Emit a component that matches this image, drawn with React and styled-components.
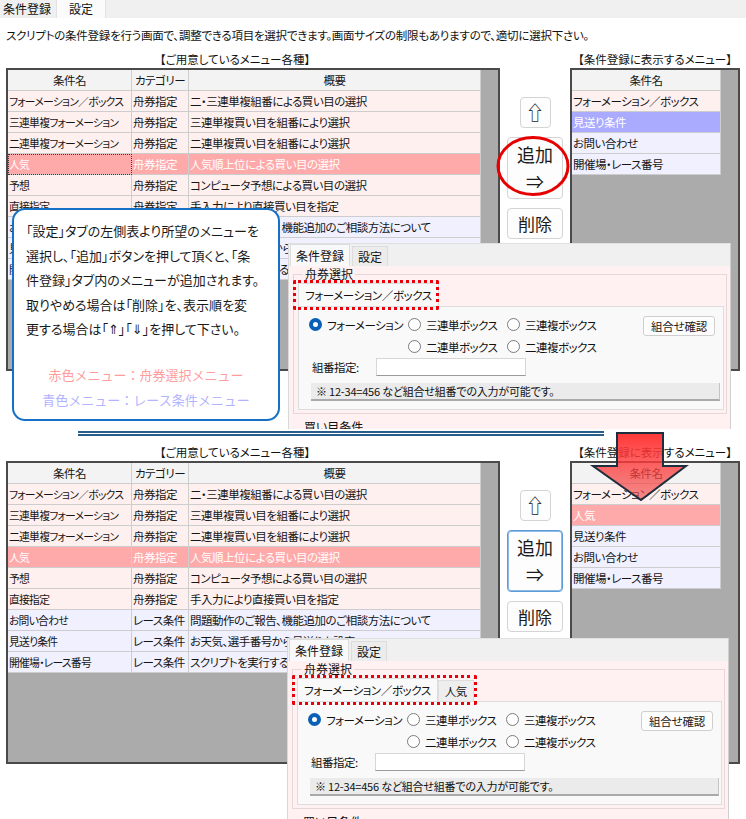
import React from "react";
import styled, { createGlobalStyle, css } from "styled-components";

const GlobalStyle = createGlobalStyle`
  html, body { margin: 0; padding: 0; background: #fff; }
  body {
    font-family: "Noto Sans CJK JP", "Noto Sans", "DejaVu Sans", sans-serif;
    font-feature-settings: "palt";
    color: #111;
  }
`;

const menuItems = [
  { name: "フォーメーション／ボックス", cat: "舟券指定", desc: "二・三連単複組番による買い目の選択", kind: "red" },
  { name: "三連単複フォーメーション", cat: "舟券指定", desc: "三連単複買い目を組番により選択", kind: "red" },
  { name: "二連単複フォーメーション", cat: "舟券指定", desc: "二連単複買い目を組番により選択", kind: "red" },
  { name: "人気", cat: "舟券指定", desc: "人気順上位による買い目の選択", kind: "red" },
  { name: "予想", cat: "舟券指定", desc: "コンピュータ予想による買い目の選択", kind: "red" },
  { name: "直接指定", cat: "舟券指定", desc: "手入力により直接買い目を指定", kind: "red" },
  { name: "お問い合わせ", cat: "レース条件", desc: "問題動作のご報告、機能追加のご相談方法について", kind: "blue" },
  { name: "見送り条件", cat: "レース条件", desc: "お天気、選手番号から見送りを設定", kind: "blue" },
  { name: "開催場・レース番号", cat: "レース条件", desc: "スクリプトを実行する場とレース番号を指定", kind: "blue" },
];

const topPicked = [
  { name: "フォーメーション／ボックス", kind: "red" },
  { name: "見送り条件", kind: "blue", selected: true },
  { name: "お問い合わせ", kind: "blue" },
  { name: "開催場・レース番号", kind: "blue" },
];

const bottomPicked = [
  { name: "フォーメーション／ボックス", kind: "red" },
  { name: "人気", kind: "red", selected: true },
  { name: "見送り条件", kind: "blue" },
  { name: "お問い合わせ", kind: "blue" },
  { name: "開催場・レース番号", kind: "blue" },
];

const rowBg = ({ $kind, $selected }) => {
  if ($selected) return $kind === "red" ? "#ffaaaa" : "#aaaaff";
  return $kind === "red" ? "#fff0f0" : "#f0f0ff";
};

const Page = styled.div`
  position: relative;
  width: 746px;
  height: 819px;
  overflow: hidden;
  background: #fff;
`;

const TopScreen = styled.div`
  height: 431px;
`;

const BottomScreen = styled.div`
  padding-top: 8px;
`;

const TabStrip = styled.div`
  display: flex;
  height: 18px;
  background: #f0f0f0;
  font-size: 12px;
  line-height: 18px;
`;

const Tab = styled.div`
  padding: 0 ${(p) => (p.$active ? "12px" : "3px")};
  margin-left: ${(p) => (p.$active ? "2px" : "0")};
  background: ${(p) => (p.$active ? "#fbfbfb" : "transparent")};
  border-left: ${(p) => (p.$active ? "1px solid #e2e2e2" : "none")};
  border-right: ${(p) => (p.$active ? "1px solid #e2e2e2" : "none")};
`;

const Description = styled.div`
  height: 33px;
  box-sizing: border-box;
  padding: 10px 0 0 6px;
  font-size: 11.5px;
  letter-spacing: -0.25px;
  line-height: 14px;
  white-space: nowrap;
`;

const LabelRow = styled.div`
  display: flex;
  height: 17px;
  font-size: 11.5px;
  line-height: 17px;
  white-space: nowrap;
`;

const ListLabel = styled.div`
  width: ${(p) => p.$width}px;
  margin-left: ${(p) => p.$offset}px;
  padding-right: ${(p) => p.$shift || 0}px;
  box-sizing: border-box;
  text-align: center;
`;

const MainRow = styled.div`
  display: flex;
  padding-left: 6px;
`;

const TableBox = styled.div`
  width: ${(p) => p.$width}px;
  height: 303px;
  box-sizing: border-box;
  border: 2px solid #4a4a4a;
  background: #ababab;
  overflow: hidden;
`;

const Row = styled.div`
  display: grid;
  width: max-content;
  grid-template-columns: ${(p) => p.$cols};
  background: ${(p) => (p.$header ? "#f3f3f3" : rowBg(p))};
`;

const Cell = styled.div`
  height: 20px;
  line-height: 20px;
  padding: 0 ${(p) => (p.$header ? "0" : "1px")};
  text-align: ${(p) => (p.$header ? "center" : "left")};
  border-right: 1px solid #cdcdcd;
  border-bottom: 1px solid #cdcdcd;
  font-size: ${(p) => (p.$narrow ? "10.8px" : "11.5px")};
  letter-spacing: ${(p) => (p.$narrow ? "-0.75px" : "-0.5px")};
  white-space: nowrap;
  overflow: hidden;
  color: ${(p) => (p.$selected ? "#fff" : "#151515")};
  ${(p) =>
    p.$focus &&
    css`
      outline: 1px dotted #3a3a3a;
      outline-offset: -1px;
    `}
`;

const ButtonCol = styled.div`
  width: 70px;
  display: flex;
  flex-direction: column;
  align-items: center;
  padding-top: 29px;
  gap: 9px;
`;

const SideButton = styled.button`
  width: ${(p) => p.$w}px;
  height: ${(p) => p.$h}px;
  box-sizing: border-box;
  padding: 0;
  border: 1px solid ${(p) => (p.$focused ? "#5c9bd6" : "#d4d4d4")};
  box-shadow: ${(p) => (p.$focused ? "inset 0 0 0 1px #8dbbe6" : "none")};
  border-radius: 4px;
  background: #fdfdfd;
  color: #1a1a1a;
  font-family: inherit;
  font-size: ${(p) => p.$size || 18}px;
  line-height: 1.5;
  display: flex;
  flex-direction: column;
  align-items: center;
  justify-content: center;
`;

const Divider = styled.div`
  margin-left: 78px;
  width: 526px;
  height: 1px;
  border-top: 2px solid #2a5d8a;
  border-bottom: 2px solid #2a5d8a;
`;

const Callout = styled.div`
  position: absolute;
  left: 12px;
  top: 208px;
  width: 268px;
  height: 213px;
  box-sizing: border-box;
  padding: 9px 0 0 12px;
  border: 2.5px solid #1670c4;
  border-radius: 13px;
  background: #fff;
  font-size: 13px;
  line-height: 24.5px;
  white-space: nowrap;
  color: #1a1a1a;
`;

const ColorLine = styled.div`
  text-align: center;
  padding-right: 12px;
  color: ${(p) => p.$color};
  margin-top: ${(p) => p.$gap || 0}px;
  line-height: 25px;
  font-feature-settings: normal;
`;

const Inset = styled.div`
  position: absolute;
  left: ${(p) => p.$left}px;
  top: ${(p) => p.$top}px;
  width: ${(p) => p.$width}px;
  height: ${(p) => p.$height}px;
  overflow: hidden;
  background: #fff1f1;
  border-left: 1px solid #d8d8d8;
  border-right: 1px solid #cfcfcf;
  border-top: 1px solid #e0e0e0;
  box-sizing: border-box;
`;

const InsetTabs = styled.div`
  display: flex;
  height: 22px;
  background: #f0f0f0;
  padding-left: 1px;
  font-size: 12px;
  line-height: 22px;
`;

const InsetTab = styled.div`
  padding: 0 5px;
  background: ${(p) => (p.$active ? "#f9f9f9" : "#ececec")};
  border: 1px solid #dcdcdc;
  border-bottom: none;
  margin-right: 2px;
  height: ${(p) => (p.$active ? "22px" : "20px")};
  margin-top: ${(p) => (p.$active ? "0" : "2px")};
  line-height: ${(p) => (p.$active ? "22px" : "20px")};
  box-sizing: border-box;
`;

const InsetBody = styled.div`
  padding: 1px 3px 0 4px;
`;

const Group = styled.fieldset`
  margin: 0;
  padding: 2px 2px 3px 4px;
  border: 1px solid #e6d8d8;
  min-width: 0;
`;

const Legend = styled.legend`
  margin-left: 5px;
  padding: 0 2px;
  font-size: 12px;
  line-height: 14px;
`;

const SubTabs = styled.div`
  position: relative;
  display: flex;
  align-items: flex-end;
  height: 23px;
  font-size: 11.5px;
  letter-spacing: -0.4px;
  &::after {
    content: "";
    position: absolute;
    left: -5px;
    top: -3px;
    width: ${(p) => p.$markWidth}px;
    height: 30px;
    border: 3.5px dotted #e8000a;
    box-sizing: border-box;
    border-radius: 2px;
  }
`;

const SubTab = styled.div`
  height: ${(p) => (p.$active ? "23px" : "21px")};
  line-height: ${(p) => (p.$active ? "23px" : "21px")};
  padding: 0 6px;
  background: ${(p) => (p.$active ? "#f9f9f9" : "#eeeeee")};
  border: 1px solid #dddddd;
  border-bottom: none;
  box-sizing: border-box;
  white-space: nowrap;
`;

const SubPage = styled.div`
  height: 104px;
  box-sizing: border-box;
  padding: 11px 8px 0 10px;
  background: #f9f9f9;
  border: 1px solid #dddddd;
  font-size: 11.5px;
  letter-spacing: -0.5px;
`;

const TopLine = styled.div`
  display: flex;
  justify-content: space-between;
`;

const RadioGrid = styled.div`
  display: grid;
  grid-template-columns: 99px 99px auto;
  row-gap: 9px;
`;

const Radio = styled.label`
  grid-column: ${(p) => p.$col};
  display: flex;
  align-items: center;
  gap: 5px;
  height: 13px;
  white-space: nowrap;
`;

const RadioDot = styled.span`
  flex: none;
  width: 13px;
  height: 13px;
  border-radius: 50%;
  box-sizing: border-box;
  background: #fff;
  border: ${(p) => (p.$on ? "4px solid #0a5fb6" : "1px solid #7b7b7b")};
`;

const CheckButton = styled.button`
  margin-top: -2px;
  width: 72px;
  height: 20px;
  padding: 0;
  border: 1px solid #cfcfcf;
  border-radius: 3px;
  background: #fdfdfd;
  font-family: inherit;
  font-size: 11.5px;
  letter-spacing: -0.3px;
  color: #1a1a1a;
`;

const FieldRow = styled.div`
  display: flex;
  align-items: center;
  margin-top: 5px;
  padding-left: 3px;
`;

const FieldLabel = styled.span`
  width: 64px;
`;

const TextBox = styled.div`
  width: 150px;
  height: 18px;
  box-sizing: border-box;
  background: #fff;
  border: 1px solid #d6d6d6;
  border-bottom-color: #9a9a9a;
`;

const Note = styled.div`
  margin: 7px 0 0 2px;
  width: 409px;
  height: 18px;
  box-sizing: border-box;
  padding-left: 5px;
  background: #ebebeb;
  border-bottom: 2px solid #a9a9a9;
  border-right: 1px solid #c4c4c4;
  font-size: 11px;
  letter-spacing: -0.2px;
  line-height: 17px;
  white-space: nowrap;
`;

const NextLegend = styled.div`
  padding: 6px 0 0 11px;
  font-size: 12px;
  line-height: 14px;
`;

const Overlay = styled.svg`
  position: absolute;
  left: ${(p) => p.$left}px;
  top: ${(p) => p.$top}px;
  overflow: visible;
`;

function MenuTable({ selectedName, focus }) {
  const cols = "124px 57px 292px";
  return (
    <TableBox $width={494}>
      <Row $cols={cols} $header>
        <Cell $header>条件名</Cell>
        <Cell $header>カテゴリー</Cell>
        <Cell $header>概要</Cell>
      </Row>
      {menuItems.map((item) => {
        const sel = item.name === selectedName;
        return (
          <Row key={item.name} $cols={cols} $kind={item.kind} $selected={sel}>
            <Cell $narrow $selected={sel} $focus={sel && focus}>{item.name}</Cell>
            <Cell $selected={sel}>{item.cat}</Cell>
            <Cell $selected={sel}>{item.desc}</Cell>
          </Row>
        );
      })}
    </TableBox>
  );
}

function PickedTable({ items }) {
  const cols = "149px";
  return (
    <TableBox $width={170}>
      <Row $cols={cols} $header>
        <Cell $header>条件名</Cell>
      </Row>
      {items.map((item) => (
        <Row key={item.name} $cols={cols} $kind={item.kind} $selected={item.selected}>
          <Cell $selected={item.selected}>{item.name}</Cell>
        </Row>
      ))}
    </TableBox>
  );
}

function Buttons({ focused }) {
  return (
    <ButtonCol>
      <SideButton $w={31} $h={31} $size={19}>⇧</SideButton>
      <SideButton $w={56} $h={62} $focused={focused}>
        <span>追加</span>
        <span>⇒</span>
      </SideButton>
      <SideButton $w={56} $h={31} $size={17}>削除</SideButton>
    </ButtonCol>
  );
}

function Lists({ selectedName, focus, picked, focusedAdd }) {
  return (
    <>
      <LabelRow>
        <ListLabel $width={494} $offset={6} $shift={36}>【ご用意しているメニュー各種】</ListLabel>
        <ListLabel $width={170} $offset={70}>【条件登録に表示するメニュー】</ListLabel>
      </LabelRow>
      <MainRow>
        <MenuTable selectedName={selectedName} focus={focus} />
        <Buttons focused={focusedAdd} />
        <PickedTable items={picked} />
      </MainRow>
    </>
  );
}

function RegisterInset({ top, left, width, height, extraTab }) {
  return (
    <Inset $top={top} $left={left} $width={width} $height={height}>
      <InsetTabs>
        <InsetTab $active>条件登録</InsetTab>
        <InsetTab>設定</InsetTab>
      </InsetTabs>
      <InsetBody>
        <Group>
          <Legend>舟券選択</Legend>
          <SubTabs $markWidth={extraTab ? 185 : 146}>
            <SubTab $active>フォーメーション／ボックス</SubTab>
            {extraTab && <SubTab>{extraTab}</SubTab>}
          </SubTabs>
          <SubPage>
            <TopLine>
              <RadioGrid>
                <Radio $col={1}><RadioDot $on />フォーメーション</Radio>
                <Radio $col={2}><RadioDot />三連単ボックス</Radio>
                <Radio $col={3}><RadioDot />三連複ボックス</Radio>
                <Radio $col={2}><RadioDot />二連単ボックス</Radio>
                <Radio $col={3}><RadioDot />二連複ボックス</Radio>
              </RadioGrid>
              <CheckButton>組合せ確認</CheckButton>
            </TopLine>
            <FieldRow>
              <FieldLabel>組番指定:</FieldLabel>
              <TextBox />
            </FieldRow>
            <Note>※ 12-34=456 など組合せ組番での入力が可能です。</Note>
          </SubPage>
        </Group>
        <NextLegend>買い目条件</NextLegend>
      </InsetBody>
    </Inset>
  );
}

export default function App() {
  return (
    <Page>
      <GlobalStyle />
      <TopScreen>
        <TabStrip>
          <Tab>条件登録</Tab>
          <Tab $active>設定</Tab>
        </TabStrip>
        <Description>
          スクリプトの条件登録を行う画面で、調整できる項目を選択できます。画面サイズの制限もありますので、適切に選択下さい。
        </Description>
        <Lists selectedName="人気" focus picked={topPicked} />
      </TopScreen>
      <Divider />
      <BottomScreen>
        <Lists selectedName="人気" picked={bottomPicked} focusedAdd />
      </BottomScreen>

      <Callout>
        「設定」タブの左側表より所望のメニューを<br />
        選択し、「追加」ボタンを押して頂くと、「条<br />
        件登録」タブ内のメニューが追加されます。<br />
        取りやめる場合は「削除」を、表示順を変<br />
        更する場合は「⇑」「⇓」を押して下さい。
        <ColorLine $color="#ff9d9d" $gap={20}>赤色メニュー：舟券選択メニュー</ColorLine>
        <ColorLine $color="#b3b3ff">青色メニュー：レース条件メニュー</ColorLine>
      </Callout>

      <RegisterInset top={243} left={288} width={443} height={186} />
      <RegisterInset top={638} left={287} width={442} height={200} extraTab="人気" />

      <Overlay $left={496} $top={135} width="74" height="62" viewBox="0 0 74 62">
        <ellipse cx="37" cy="31" rx="35" ry="28.5" fill="none" stroke="#e60000" strokeWidth="3" />
      </Overlay>

      <Overlay $left={590} $top={430} width="100" height="74" viewBox="0 0 100 74">
        <defs>
          <linearGradient id="arrowFill" x1="0" y1="0" x2="0" y2="1">
            <stop offset="0" stopColor="#ff2e2e" stopOpacity="0.95" />
            <stop offset="0.45" stopColor="#ff3a3a" stopOpacity="0.8" />
            <stop offset="1" stopColor="#ee4a4a" stopOpacity="0.62" />
          </linearGradient>
        </defs>
        <polygon
          points="27,3 73,3 73,36 96,36 51,70 3,36 27,36"
          fill="url(#arrowFill)"
          stroke="#1f2e3c"
          strokeWidth="2"
          strokeLinejoin="miter"
        />
      </Overlay>
    </Page>
  );
}
